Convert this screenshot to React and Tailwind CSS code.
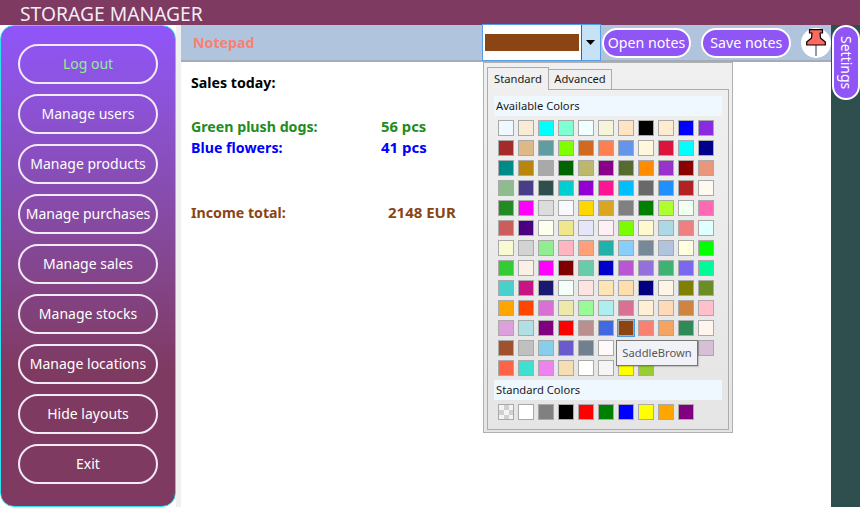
const SIDE = ["Log out","Manage users","Manage products","Manage purchases","Manage sales","Manage stocks","Manage locations","Hide layouts","Exit"];
const COLORS = [
["#F0F8FF","#FAEBD7","#00FFFF","#7FFFD4","#F0FFFF","#F5F5DC","#FFE4C4","#000000","#FFEBCD","#0000FF","#8A2BE2"],
["#A52A2A","#DEB887","#5F9EA0","#7FFF00","#D2691E","#FF7F50","#6495ED","#FFF8DC","#DC143C","#00FFFF","#00008B"],
["#008B8B","#B8860B","#A9A9A9","#006400","#BDB76B","#8B008B","#556B2F","#FF8C00","#9932CC","#8B0000","#E9967A"],
["#8FBC8F","#483D8B","#2F4F4F","#00CED1","#9400D3","#FF1493","#00BFFF","#696969","#1E90FF","#B22222","#FFFAF0"],
["#228B22","#FF00FF","#DCDCDC","#F8F8FF","#FFD700","#DAA520","#808080","#008000","#ADFF2F","#F0FFF0","#FF69B4"],
["#CD5C5C","#4B0082","#FFFFF0","#F0E68C","#E6E6FA","#FFF0F5","#7CFC00","#FFFACD","#ADD8E6","#F08080","#E0FFFF"],
["#FAFAD2","#D3D3D3","#90EE90","#FFB6C1","#FFA07A","#20B2AA","#87CEFA","#778899","#B0C4DE","#FFFFE0","#00FF00"],
["#32CD32","#FAF0E6","#FF00FF","#800000","#66CDAA","#0000CD","#BA55D3","#9370DB","#3CB371","#7B68EE","#00FA9A"],
["#48D1CC","#C71585","#191970","#F5FFFA","#FFE4E1","#FFE4B5","#FFDEAD","#000080","#FDF5E6","#808000","#6B8E23"],
["#FFA500","#FF4500","#DA70D6","#EEE8AA","#98FB98","#AFEEEE","#DB7093","#FFEFD5","#FFDAB9","#CD853F","#FFC0CB"],
["#DDA0DD","#B0E0E6","#800080","#FF0000","#BC8F8F","#4169E1","#8B4513","#FA8072","#F4A460","#2E8B57","#FFF5EE"],
["#A0522D","#C0C0C0","#87CEEB","#6A5ACD","#708090","#FFFAFA","#00FF7F","#4682B4","#D2B48C","#008080","#D8BFD8"],
["#FF6347","#40E0D0","#EE82EE","#F5DEB3","#FFFFFF","#F5F5F5","#FFFF00","#9ACD32"],
];
const STD = ["#FFFFFF","#808080","#000000","#FF0000","#008000","#0000FF","#FFFF00","#FFA500","#800080"];

function Swatch({ color, selected }) {
  return (
    <div className={selected ? "w-4 h-4 relative border border-[#a9a9a9]" : "w-4 h-4 border border-[#a9a9a9]"} style={{ backgroundColor: color }}>
      {selected && <div className="absolute -inset-[2px] border-[1px] border-[#4a9ae8]" />}
    </div>
  );
}

function Pin() {
  return (
    <svg width="20" height="27" viewBox="0 0 20 27">
      <path d="M10 15V27" stroke="#9a9a9a" strokeWidth="2" />
      <path d="M3.500 0.700H16.500V4H14L14.500 9L19.300 13V16H0.700V13L5.500 9L6 4H3.500Z" fill="#fa6a5e" stroke="#000" strokeWidth="1.200" strokeLinejoin="round" />
    </svg>
  );
}

export default function App() {
  return (
    <div className="relative w-[860px] h-[507px] overflow-hidden flex flex-col bg-white font-['Noto_Sans','Open_Sans',sans-serif]">
      <div className="h-[25px] shrink-0 bg-[#7f3a61] pl-5 text-[19.300px] leading-[27px] text-[#f2ecf4]">STORAGE MANAGER</div>
      <div className="flex-1 flex min-h-0">
        <div className="w-[176px] shrink-0 rounded-[14px] border border-[#2fe0ee] bg-gradient-to-b from-[#9055fa] via-[#7f3a61] via-[72%] to-[#7f3a61] flex flex-col items-center pt-[18px] gap-[10px]">
          {SIDE.map((s, i) => (
            <div key={s} className={`w-[140px] h-10 shrink-0 rounded-[20px] border-2 border-[#f3eaf8] pb-[2px] flex items-center justify-center text-[14px] whitespace-nowrap ${i === 0 ? "text-[#90ee90]" : "text-white"}`}>{s}</div>
          ))}
        </div>
        <div className="w-[5px] shrink-0 bg-[#f0f0f0]" />
        <div className="flex-1 flex flex-col min-w-0">
          <div className="h-[37px] shrink-0 bg-[#b0c4de] border-b-2 border-[#a3adba] flex items-center pl-3">
            <div className="w-[290px] text-[14.200px] font-bold text-[#fa8072]">Notepad</div>
            <div className="w-[119px] h-[37px] flex border border-[#569de5] bg-white">
              <div className="flex-1 flex items-center pl-[2px] pr-[2px]"><div className="w-full h-[17px] bg-[#8b4513]" /></div>
              <div className="w-[19px] bg-[#c6e2f7] border-l border-[#2a6a98] flex items-center justify-center">
                <svg width="9" height="5" viewBox="0 0 9 5"><path d="M0 0H9L4.500 5Z" fill="#000" /></svg>
              </div>
            </div>
            <div className="ml-[1px] w-[90px] h-[30px] rounded-[15px] border-2 border-white bg-[#9055f5] flex items-center justify-center text-[14.200px] text-white whitespace-nowrap">Open notes</div>
            <div className="ml-[10px] w-[90px] h-[30px] rounded-[15px] border-2 border-white bg-[#9055f5] flex items-center justify-center text-[14.200px] text-white whitespace-nowrap">Save notes</div>
            <div className="ml-[10px] w-[30px] h-[30px] rounded-full bg-white flex items-center justify-center"><Pin /></div>
          </div>
          <div className="flex-1 pl-[10px] pt-[10px] text-[14.200px] font-bold leading-[21px]">
            <div className="text-black">Sales today:</div>
            <div className="mt-[23px] flex text-[#228b22]"><span className="w-[190px]">Green plush dogs:</span><span className="text-[14.800px]">56 pcs</span></div>
            <div className="flex text-[#0000ff]"><span className="w-[190px]">Blue flowers:</span><span className="text-[15px]">41 pcs</span></div>
            <div className="mt-[44px] flex text-[#8b4513]"><span className="w-[197px]">Income total:</span><span className="text-[15px]">2148 EUR</span></div>
          </div>
        </div>
        <div className="w-[29px] shrink-0 bg-[#2f4f4f]" />
      </div>

      <div className="absolute left-[832px] top-[25px] w-[28px] h-[75px] rounded-[14px] border-2 border-white bg-[#9055f5] flex items-center justify-center text-[14px] text-white [writing-mode:vertical-rl]">Settings</div>

      <div className="absolute left-[483px] top-[62px] w-[250px] h-[371px] border border-[#b0b0b0] bg-gradient-to-b from-[#f0f0f0] to-[#e5e5e5] pl-[3px] pt-[3px] text-[11.200px] text-[#1a1a1a]">
        <div className="flex items-end h-[23px]">
          <div className="w-[62px] h-[23px] border border-b-0 border-[#acacac] bg-[#f0f0f0] flex items-center justify-center relative z-10 -mb-px">Standard</div>
          <div className="w-[63px] h-[20px] border border-l-0 border-b-0 border-[#acacac] bg-[#f0f0f0] flex items-center justify-center">Advanced</div>
        </div>
        <div className="w-[242px] h-[341px] border border-[#acacac] pl-[6px] pt-[6px]">
          <div className="w-[228px] h-5 bg-[#f0f8ff] pl-[2px] leading-5">Available Colors</div>
          <div className="mt-1 ml-[4px] flex flex-col gap-1">
            {COLORS.map((row, r) => (
              <div key={r} className="flex gap-1">
                {row.map((c, i) => <Swatch key={i} color={c} selected={r === 10 && i === 6} />)}
              </div>
            ))}
          </div>
          <div className="mt-1 w-[228px] h-5 bg-[#f0f8ff] pl-[2px] leading-5">Standard Colors</div>
          <div className="mt-1 ml-[4px] flex gap-1">
            <div className="w-4 h-4 border border-[#a9a9a9] bg-[length:10px_10px] bg-[conic-gradient(#d0d0d0_25%,#f4f4f4_0_50%,#d0d0d0_0_75%,#f4f4f4_0)]" />
            {STD.map((c, i) => <Swatch key={i} color={c} />)}
          </div>
        </div>
      </div>

      <div className="absolute left-[616px] top-[340px] w-[82px] h-[26px] border border-[#767676] bg-[#f1f2f7] flex items-center justify-center text-[11.200px] text-[#575757] shadow-[1px_1px_1px_rgba(0,0,0,0.15)]">SaddleBrown</div>
    </div>
  );
}
